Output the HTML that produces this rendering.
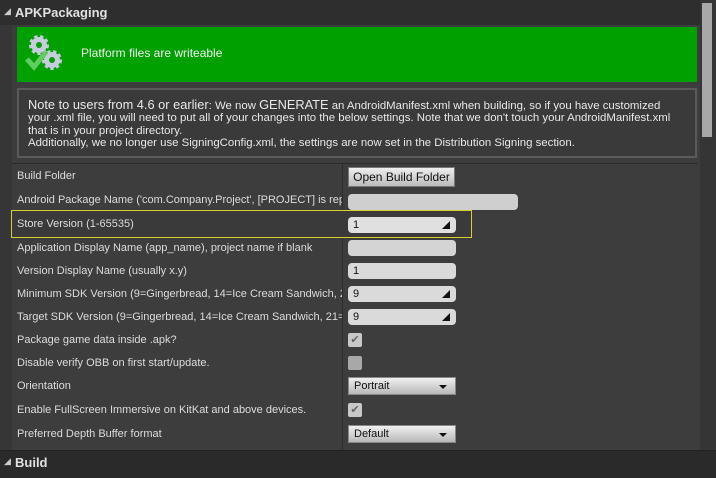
<!DOCTYPE html>
<html><head><style>
body{margin:0;width:716px;height:477px;overflow:hidden;background:#3d3d3d;font-family:"Liberation Sans",sans-serif;position:relative}
.a{position:absolute}
.lbl{position:absolute;left:17px;font-size:11px;color:#dcdcdc;white-space:nowrap;width:325px;overflow:hidden}
.in{position:absolute;left:348px;width:108px;height:16px;background:#dadada;border-radius:4px;font-size:11px;color:#111;line-height:16px;padding-left:5px;box-sizing:border-box}
.sp::after{content:"";position:absolute;right:6px;top:4px;width:0;height:0;border-left:8px solid transparent;border-bottom:8px solid #111}
.dd{position:absolute;left:348px;width:108px;height:18px;background:linear-gradient(#f0f0f0,#b8b8b8);border:1px solid #888;box-sizing:border-box;font-size:11px;line-height:16px;padding-left:5px;color:#111}
.dd::after{content:"";position:absolute;right:8px;top:7px;border-left:4px solid transparent;border-right:4px solid transparent;border-top:4px solid #111}
.cb{position:absolute;left:348px;width:14px;height:14px;background:#c8c8c8;border-radius:2px;color:#666;font-size:11px;line-height:14px;text-align:center}
</style></head><body>
<div class="a" style="left:0;top:0;width:716px;height:25px;background:#2e2e2e"></div>
<div class="a" style="left:4px;top:6px;font-size:9px;color:#ccc">◢</div>
<div class="a" style="left:15px;top:5px;font-size:13px;font-weight:bold;color:#e0e0e0">APKPackaging</div>
<div class="a" style="left:0;top:25px;width:12px;height:425px;background:#363636"></div>
<div class="a" style="left:17px;top:27px;width:680px;height:55px;background:#00a000"></div>
<svg class="a" style="left:24px;top:32px" width="42" height="42" viewBox="0 0 42 42">
<circle cx="15" cy="13" r="8" fill="#c8cce0" stroke="#c8cce0" stroke-width="4" stroke-dasharray="3 2.5"/><circle cx="15" cy="13" r="3" fill="#00a000"/>
<circle cx="28" cy="28" r="8" fill="#c8cce0" stroke="#c8cce0" stroke-width="4" stroke-dasharray="3 2.5"/><circle cx="28" cy="28" r="3" fill="#00a000"/>
<path d="M3 27 L10 35 L22 20" stroke="#5fce5f" stroke-width="5" fill="none"/></svg>
<div class="a" style="left:81px;top:46px;font-size:12px;color:#f0f0f0">Platform files are writeable</div>
<div class="a" style="left:17px;top:88px;width:680px;height:70px;border:2px solid #5a5a5a;box-sizing:border-box;background:#3a3a3a"></div>
<div class="a" style="left:28px;top:99px;font-size:11.4px;color:#e8e8e8;line-height:12.3px;white-space:nowrap"><span style="font-size:12.8px">Note to users from 4.6 or earlier</span>: We now <span style="font-size:12.8px">GENERATE</span> an AndroidManifest.xml when building, so if you have customized<br>your .xml file, you will need to put all of your changes into the below settings. Note that we don't touch your AndroidManifest.xml<br>that is in your project directory.<br>Additionally, we no longer use SigningConfig.xml, the settings are now set in the Distribution Signing section.</div>
<div class="a" style="left:12px;top:163px;width:686px;height:1px;background:#2c2c2c"></div>
<div class="a" style="left:342px;top:164px;width:1px;height:286px;background:#2c2c2c"></div>
<div class="a" style="left:700px;top:0;width:16px;height:450px;background:#353535"></div>
<div class="a" style="left:702px;top:3px;width:10px;height:134px;background:#a8a8a8"></div>
<div class="lbl" style="top:170px">Build Folder</div>
<div class="a" style="left:348px;top:167px;width:107px;height:20px;background:linear-gradient(#eee,#bbb);border:1px solid #777;box-sizing:border-box;font-size:12px;line-height:18px;text-align:center;color:#111">Open Build Folder</div>
<div class="lbl" style="top:194px">Android Package Name ('com.Company.Project', [PROJECT] is rep</div>
<div class="in" style="top:194px;width:170px;background:#cfcfcf"></div>
<div class="a" style="left:11px;top:210px;width:461px;height:28px;border:1px solid #d8d030;box-sizing:border-box;background:#3a3a3a"></div>
<div class="lbl" style="top:218px">Store Version (1-65535)</div>
<div class="in sp" style="top:217px;background:#e0e0e0">1</div>
<div class="lbl" style="top:242px">Application Display Name (app_name), project name if blank</div>
<div class="in" style="top:240px;background:#d4d4d4"></div>
<div class="lbl" style="top:265px">Version Display Name (usually x.y)</div>
<div class="in" style="top:263px">1</div>
<div class="lbl" style="top:288px">Minimum SDK Version (9=Gingerbread, 14=Ice Cream Sandwich, 2</div>
<div class="in sp" style="top:286px">9</div>
<div class="lbl" style="top:311px">Target SDK Version (9=Gingerbread, 14=Ice Cream Sandwich, 21=</div>
<div class="in sp" style="top:309px">9</div>
<div class="lbl" style="top:334px">Package game data inside .apk?</div>
<div class="cb" style="top:333px">✔</div>
<div class="lbl" style="top:357px">Disable verify OBB on first start/update.</div>
<div class="cb" style="top:356px;background:#a8a8a8"></div>
<div class="lbl" style="top:380px">Orientation</div>
<div class="dd" style="top:377px">Portrait</div>
<div class="lbl" style="top:404px">Enable FullScreen Immersive on KitKat and above devices.</div>
<div class="cb" style="top:403px">✔</div>
<div class="lbl" style="top:428px">Preferred Depth Buffer format</div>
<div class="dd" style="top:425px">Default</div>
<div class="a" style="left:0;top:450px;width:716px;height:27px;background:#2a2a2a;border-top:1px solid #222"></div>
<div class="a" style="left:4px;top:456px;font-size:9px;color:#ccc">◢</div>
<div class="a" style="left:15px;top:455px;font-size:13px;font-weight:bold;color:#e0e0e0">Build</div>
</body></html>
